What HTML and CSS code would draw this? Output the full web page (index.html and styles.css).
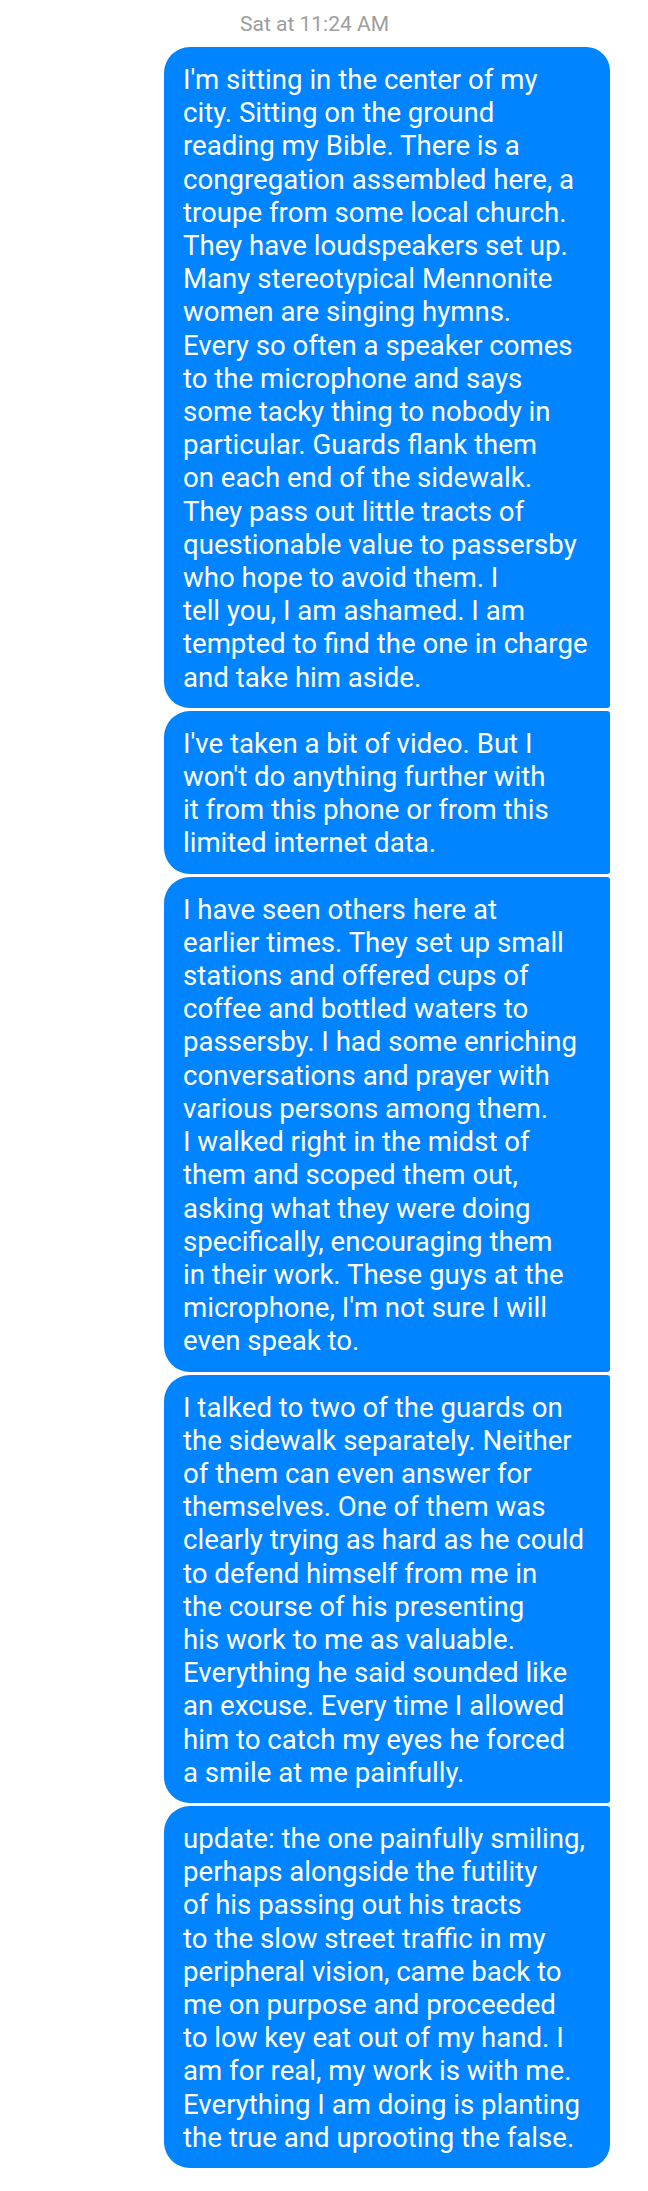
FILE: index.html
```html
<!DOCTYPE html>
<html lang="en">
<head>
<meta charset="utf-8">
<title>Messages</title>
<link rel="stylesheet" href="styles.css">
</head>
<body>
<div class="thread">
  <div class="stamp">Sat at 11:24 AM</div>
  <div class="group">
    <div class="bubble first">I'm sitting in the center of my<br>city. Sitting on the ground<br>reading my Bible. There is a<br>congregation assembled here, a<br>troupe from some local church.<br>They have loudspeakers set up.<br>Many stereotypical Mennonite<br>women are singing hymns.<br>Every so often a speaker comes<br>to the microphone and says<br>some tacky thing to nobody in<br>particular. Guards flank them<br>on each end of the sidewalk.<br>They pass out little tracts of<br>questionable value to passersby<br>who hope to avoid them. I<br>tell you, I am ashamed. I am<br>tempted to find the one in charge<br>and take him aside.</div>
    <div class="bubble">I've taken a bit of video. But I<br>won't do anything further with<br>it from this phone or from this<br>limited internet data.</div>
    <div class="bubble">I have seen others here at<br>earlier times. They set up small<br>stations and offered cups of<br>coffee and bottled waters to<br>passersby. I had some enriching<br>conversations and prayer with<br>various persons among them.<br>I walked right in the midst of<br>them and scoped them out,<br>asking what they were doing<br>specifically, encouraging them<br>in their work. These guys at the<br>microphone, I'm not sure I will<br>even speak to.</div>
    <div class="bubble">I talked to two of the guards on<br>the sidewalk separately. Neither<br>of them can even answer for<br>themselves. One of them was<br>clearly trying as hard as he could<br>to defend himself from me in<br>the course of his presenting<br>his work to me as valuable.<br>Everything he said sounded like<br>an excuse. Every time I allowed<br>him to catch my eyes he forced<br>a smile at me painfully.</div>
    <div class="bubble last">update: the one painfully smiling,<br>perhaps alongside the futility<br>of his passing out his tracts<br>to the slow street traffic in my<br>peripheral vision, came back to<br>me on purpose and proceeded<br>to low key eat out of my hand. I<br>am for real, my work is with me.<br>Everything I am doing is planting<br>the true and uprooting the false.</div>
  </div>
</div>
</body>
</html>
```

FILE: styles.css
```css
html, body {
  margin: 0;
  padding: 0;
  background: #ffffff;
}

body {
  font-family: Roboto, "Noto Sans", "Liberation Sans", sans-serif;
}

.thread {
  width: 648px;
  box-sizing: border-box;
  padding: 12px 38px 0 0;
  display: flex;
  flex-direction: column;
}

.stamp {
  font-size: 21px;
  line-height: 24px;
  color: #9e9e9e;
  text-align: center;
  padding-left: 19px;
  margin-bottom: 11px;
}

.group {
  display: flex;
  flex-direction: column;
  align-items: flex-end;
  gap: 3px;
}

.bubble {
  width: 446px;
  box-sizing: border-box;
  padding: 16px 8px 14px 19px;
  background: #0084ff;
  color: #ffffff;
  font-size: 27.6px;
  line-height: 33.2px;
  white-space: nowrap;
  border-radius: 26px 3px 3px 26px;
}

.bubble.first {
  border-top-right-radius: 24px;
}

.bubble.last {
  border-bottom-right-radius: 24px;
}
```
